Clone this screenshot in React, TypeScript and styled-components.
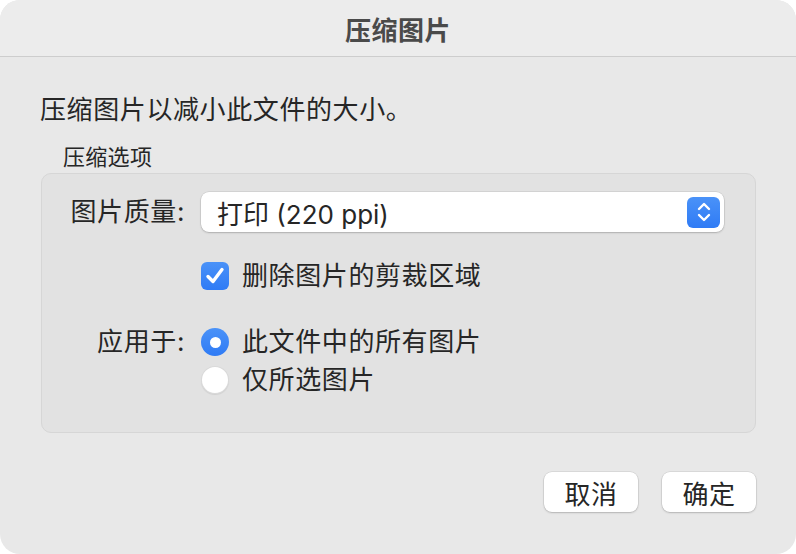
import styled, { createGlobalStyle } from "styled-components";

const GlobalStyle = createGlobalStyle`
	html, body {
		margin: 0;
		padding: 0;
		background: #ffffff;
	}
	body {
		font-family: "Inter", "Noto Sans CJK SC", sans-serif;
		color: #262626;
	}
`;

const Window = styled.div`
	width: 796px;
	height: 554px;
	border-radius: 20px;
	overflow: hidden;
	background: #e8e8e8;
	display: flex;
	flex-direction: column;
`;

const TitleBar = styled.div`
	height: 56px;
	flex: none;
	background: #ececec;
	border-bottom: 1px solid #cdcdcd;
	display: flex;
	align-items: center;
	justify-content: center;
	font-size: 26px;
	font-weight: 700;
	color: #4a4a4a;
	letter-spacing: 0.5px;
`;

const Body = styled.div`
	padding: 36px 40px 0 40px;
	display: flex;
	flex-direction: column;
`;

const Description = styled.div`
	font-size: 26px;
	line-height: 34px;
	letter-spacing: 0.6px;
`;

const GroupLabel = styled.div`
	font-size: 22px;
	line-height: 30px;
	margin: 15px 0 1px 23px;
	letter-spacing: 0.3px;
`;

const GroupBox = styled.div`
	margin-left: 1px;
	height: 260px;
	box-sizing: border-box;
	background: #e2e2e2;
	border: 1px solid #d6d6d6;
	border-radius: 10px;
	padding: 18px 31px 0 0;
	display: flex;
	flex-direction: column;
`;

const Row = styled.div<{ $top?: number }>`
	display: flex;
	align-items: center;
	margin-top: ${(p) => p.$top ?? 0}px;
`;

const FieldLabel = styled.div`
	width: 143px;
	flex: none;
	text-align: right;
	font-size: 26px;
	line-height: 34px;
	letter-spacing: 0.6px;
`;

const Control = styled.div`
	margin-left: 16px;
	flex: 1;
	display: flex;
	align-items: center;
`;

const Select = styled.div`
	flex: 1;
	height: 40px;
	background: #ffffff;
	border-radius: 8px;
	box-shadow: 0 0 0 0.5px rgba(0, 0, 0, 0.12), 0 1px 2px rgba(0, 0, 0, 0.18);
	display: flex;
	align-items: center;
	justify-content: space-between;
	padding: 0 4px 0 16px;
	font-size: 26px;
`;

const Stepper = styled.div`
	width: 33px;
	height: 31px;
	border-radius: 6px;
	background: linear-gradient(#4a92f8, #2f7bf5);
	display: flex;
	align-items: center;
	justify-content: center;
`;

const Box = styled.div`
	width: 28px;
	height: 28px;
	border-radius: 6px;
	background: linear-gradient(#4a92f8, #2f7bf5);
	display: flex;
	align-items: center;
	justify-content: center;
	flex: none;
`;

const Radio = styled.div<{ $on?: boolean }>`
	width: 28px;
	height: 28px;
	border-radius: 50%;
	box-sizing: border-box;
	flex: none;
	display: flex;
	align-items: center;
	justify-content: center;
	background: ${(p) => (p.$on ? "linear-gradient(#4a92f8, #2f7bf5)" : "#ffffff")};
	box-shadow: ${(p) =>
		p.$on
			? "none"
			: "inset 0 0 0 1px rgba(0, 0, 0, 0.15), 0 1px 1px rgba(0, 0, 0, 0.08)"};
`;

const Dot = styled.div`
	width: 11px;
	height: 11px;
	border-radius: 50%;
	background: #ffffff;
`;

const OptionText = styled.span`
	margin-left: 13px;
	font-size: 26px;
	line-height: 34px;
	letter-spacing: 0.6px;
`;

const Footer = styled.div`
	display: flex;
	justify-content: flex-end;
	gap: 24px;
	margin-top: 39px;
`;

const Button = styled.div`
	width: 94px;
	height: 40px;
	background: #ffffff;
	border-radius: 8px;
	box-shadow: 0 0 0 0.5px rgba(0, 0, 0, 0.12), 0 1px 2px rgba(0, 0, 0, 0.18);
	display: flex;
	align-items: center;
	justify-content: center;
	font-size: 26px;
	letter-spacing: 0.5px;
`;

const App = () => {
	return (
		<>
			<GlobalStyle />
			<Window>
				<TitleBar>压缩图片</TitleBar>
				<Body>
					<Description>压缩图片以减小此文件的大小。</Description>
					<GroupLabel>压缩选项</GroupLabel>
					<GroupBox>
						<Row>
							<FieldLabel>图片质量:</FieldLabel>
							<Control>
								<Select>
									<span>打印 (220 ppi)</span>
									<Stepper>
										<svg width="16" height="22" viewBox="0 0 16 22">
											<path
												d="M3 8 L8 3 L13 8 M3 14 L8 19 L13 14"
												fill="none"
												stroke="#fff"
												strokeWidth="2.4"
												strokeLinecap="round"
												strokeLinejoin="round"
											/>
										</svg>
									</Stepper>
								</Select>
							</Control>
						</Row>
						<Row $top={27}>
							<FieldLabel />
							<Control>
								<Box>
									<svg width="24" height="24" viewBox="0 0 24 24">
										<path
											d="M5 12.5 L10 17.5 L19 5.5"
											fill="none"
											stroke="#fff"
											strokeWidth="3.4"
											strokeLinecap="round"
											strokeLinejoin="round"
										/>
									</svg>
								</Box>
								<OptionText>删除图片的剪裁区域</OptionText>
							</Control>
						</Row>
						<Row $top={32}>
							<FieldLabel>应用于:</FieldLabel>
							<Control>
								<Radio $on>
									<Dot />
								</Radio>
								<OptionText>此文件中的所有图片</OptionText>
							</Control>
						</Row>
						<Row $top={4}>
							<FieldLabel />
							<Control>
								<Radio />
								<OptionText>仅所选图片</OptionText>
							</Control>
						</Row>
					</GroupBox>
					<Footer>
						<Button>取消</Button>
						<Button>确定</Button>
					</Footer>
				</Body>
			</Window>
		</>
	);
};

export default App;
